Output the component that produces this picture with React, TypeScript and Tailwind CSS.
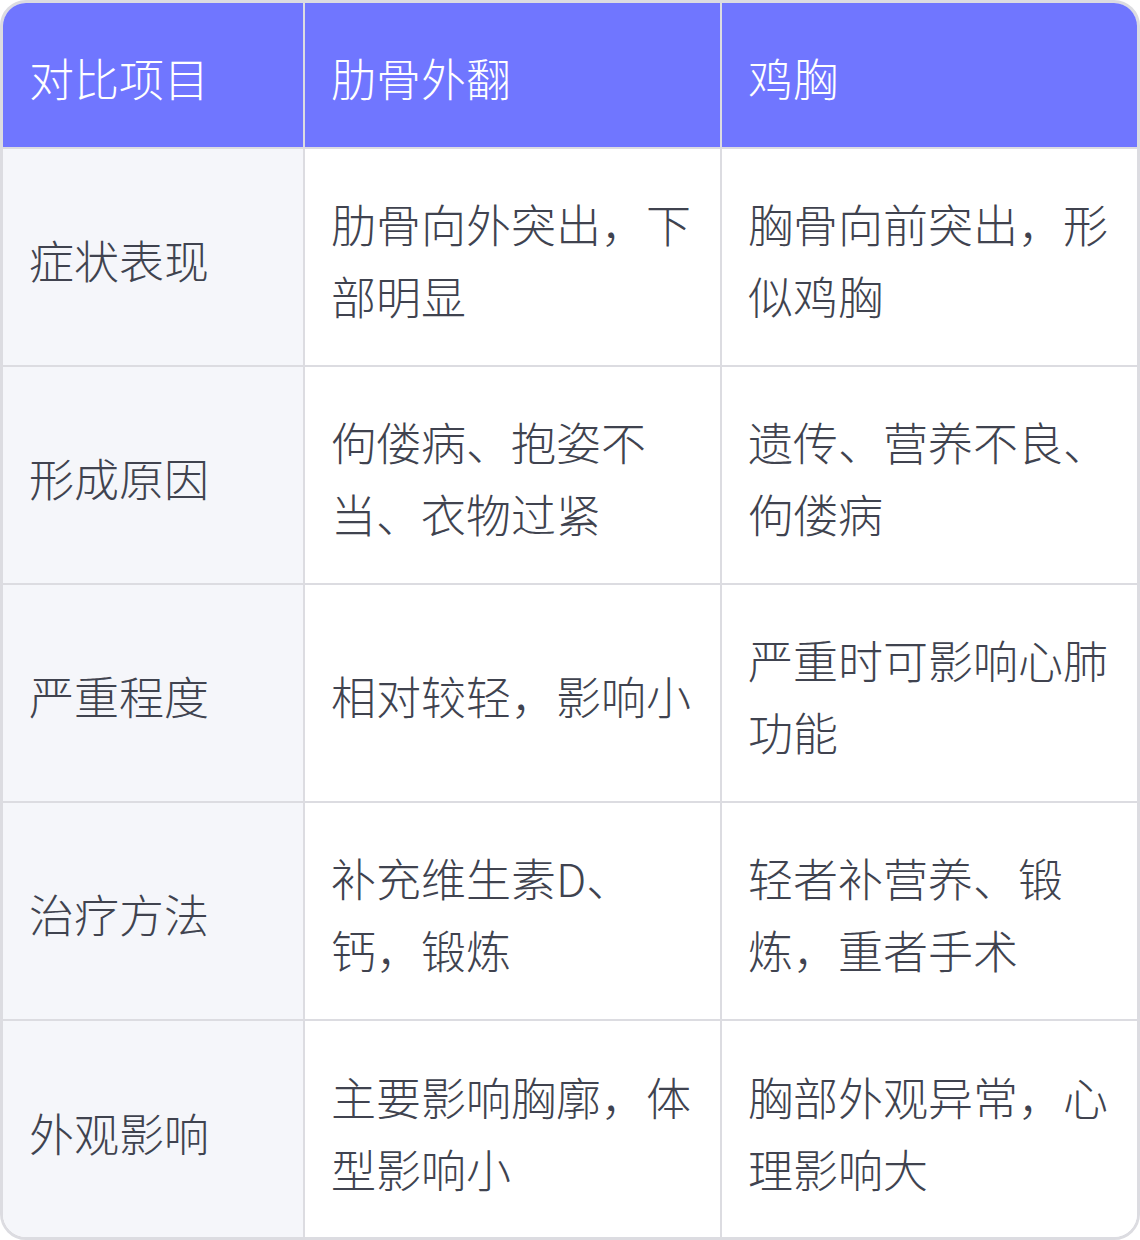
const header = ["对比项目", "肋骨外翻", "鸡胸"];

const rows: [string, string, string][] = [
  ["症状表现", "肋骨向外突出，下部明显", "胸骨向前突出，形似鸡胸"],
  ["形成原因", "佝偻病、抱姿不当、衣物过紧", "遗传、营养不良、佝偻病"],
  ["严重程度", "相对较轻，影响小", "严重时可影响心肺功能"],
  ["治疗方法", "补充维生素D、钙，锻炼", "轻者补营养、锻炼，重者手术"],
  ["外观影响", "主要影响胸廓，体型影响小", "胸部外观异常，心理影响大"],
];

export default function App() {
  return (
    <div
      className="w-[1140px] h-[1240px] border-[3px] border-[#dcdce1] rounded-[26px] overflow-hidden bg-white"
      style={{ fontFamily: '"Noto Sans CJK SC", "Noto Sans", sans-serif' }}
    >
      <div className="grid grid-cols-[300px_417px_417px] text-[45px] leading-[72px] font-light">
        {header.map((h, i) => (
          <div
            key={h}
            className={`h-[146px] flex items-center pl-[26px] pr-[20px] pt-[6px] bg-[#7076ff] text-white border-b-2 border-[#dcdce1] ${
              i > 0 ? "border-l-2" : ""
            }`}
          >
            {h}
          </div>
        ))}
        {rows.map((r, ri) =>
          r.map((c, ci) => (
            <div
              key={`${ri}-${ci}`}
              className={`h-[218px] flex items-center pl-[26px] pr-[20px] pt-[6px] text-[#40434f] ${
                ri < rows.length - 1 ? "border-b-2" : ""
              } border-[#dcdce1] ${ci > 0 ? "border-l-2 bg-white" : "bg-[#f5f6fa]"}`}
            >
              <span>{c}</span>
            </div>
          ))
        )}
      </div>
    </div>
  );
}
